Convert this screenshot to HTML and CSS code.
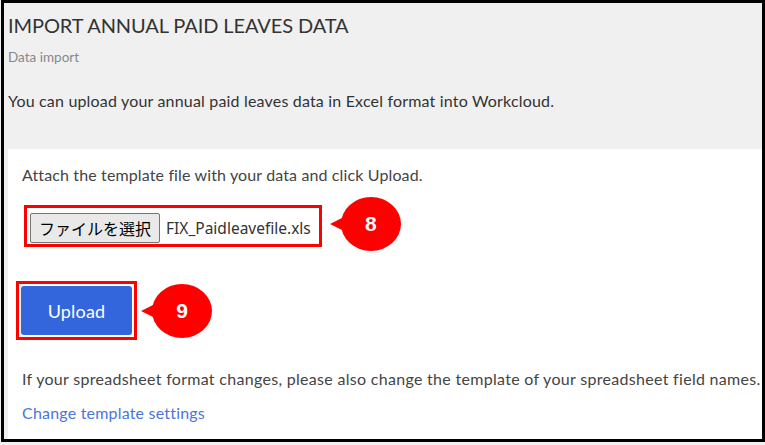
FILE: index.html
```html
<!DOCTYPE html>
<html lang="en">
  <head>
    <meta charset="UTF-8" />
    <meta name="viewport" content="width=device-width, initial-scale=1.0" />
    <title>Import annual paid leaves data</title>
    <link rel="stylesheet" href="styles.css">
  </head>

  <body>
    <div class="frame">
      <header class="page-head">
        <h1>IMPORT ANNUAL PAID LEAVES DATA</h1>
        <p class="sub">Data import</p>
        <p class="lead">You can upload your annual paid leaves data in Excel format into Workcloud.</p>
      </header>

      <section class="import-card">
        <p class="hint">Attach the template file with your data and click Upload.</p>

        <div class="step step-file">
          <div class="mark file-mark">
            <button type="button" class="pick">ファイルを選択</button>
            <span class="fname">FIX_Paidleavefile.xls</span>
          </div>
          <span class="callout">8</span>
        </div>

        <div class="step step-upload">
          <div class="mark upload-mark">
            <button type="button" class="upload">Upload</button>
          </div>
          <span class="callout">9</span>
        </div>

        <p class="note">If your spreadsheet format changes, please also change the template of your spreadsheet field names.</p>
        <a href="#" class="link">Change template settings</a>
      </section>
    </div>
  </body>
</html>
```

FILE: styles.css
```css
body {
  margin: 0;
  background: #f0f0f0;
  font-family: "Lato", "Noto Sans", sans-serif;
  color: #444;
}

.frame {
  margin-left: 1px;
  width: 764px;
  height: 442px;
  box-sizing: border-box;
  border: 3px solid #000;
  background: #f0f0f0;
  overflow: hidden;
  display: flex;
  flex-direction: column;
}

.page-head {
  padding: 10px 4px 0;
  height: 136px;
}

.page-head h1 {
  margin: 0;
  font-size: 20px;
  line-height: 24px;
  font-weight: 400;
  letter-spacing: -0.1px;
  color: #333;
}

.page-head .sub {
  margin: 11px 0 0;
  font-size: 13.5px;
  line-height: 18px;
  color: #888;
}

.page-head .lead {
  margin: 25px 0 0;
  font-size: 16px;
  line-height: 20px;
  letter-spacing: 0.18px;
  color: #333;
}

.import-card {
  flex: 1;
  margin-left: 4px;
  background: #fff;
  padding: 16px 14px 0;
  font-size: 16px;
  letter-spacing: 0.2px;
}

.hint {
  margin: 0;
  line-height: 20px;
  letter-spacing: 0.13px;
}

.step {
  display: flex;
  align-items: center;
  letter-spacing: 0;
}

.mark {
  border: 3px solid #f00;
}

.step-file {
  margin-top: 16px;
  margin-left: 2px;
  gap: 19px;
}

.file-mark {
  display: flex;
  align-items: center;
  gap: 6px;
  padding: 5px 8px 1px 3px;
}

.pick {
  font-family: "Noto Sans CJK JP", sans-serif;
  font-size: 16px;
  line-height: 20px;
  padding: 4px 8px;
  color: #000;
  background: #e9e9e9;
  border: 1px solid #767676;
  border-radius: 2px;
}

.fname {
  font-family: "Noto Sans", sans-serif;
  font-size: 15.5px;
  color: #333;
}

.step-upload {
  margin-top: 30px;
  margin-left: -6px;
  gap: 15px;
}

.upload-mark {
  padding: 2px;
}

.upload {
  width: 111px;
  height: 49px;
  border: none;
  border-radius: 3px;
  background: #3366dc;
  color: #fff;
  font-family: "Lato", sans-serif;
  font-size: 18px;
  letter-spacing: 0.2px;
}

.callout {
  position: relative;
  width: 60px;
  height: 54px;
  margin-top: -4px;
  border-radius: 50%;
  background: #f00;
  color: #fff;
  font-family: "Liberation Sans", Arial, sans-serif;
  font-weight: 700;
  font-size: 21px;
  display: flex;
  align-items: center;
  justify-content: center;
}

.callout::before {
  content: "";
  position: absolute;
  left: -11px;
  top: 50%;
  margin-top: -8px;
  border-right: 16px solid #f00;
  border-top: 8px solid transparent;
  border-bottom: 8px solid transparent;
}

.step-upload .callout {
  margin-top: 0;
}

.note {
  margin: 29px 0 0;
  line-height: 20px;
  letter-spacing: 0.3px;
  white-space: nowrap;
}

.link {
  display: inline-block;
  margin-top: 14px;
  color: #4a76dc;
  text-decoration: none;
}
```
